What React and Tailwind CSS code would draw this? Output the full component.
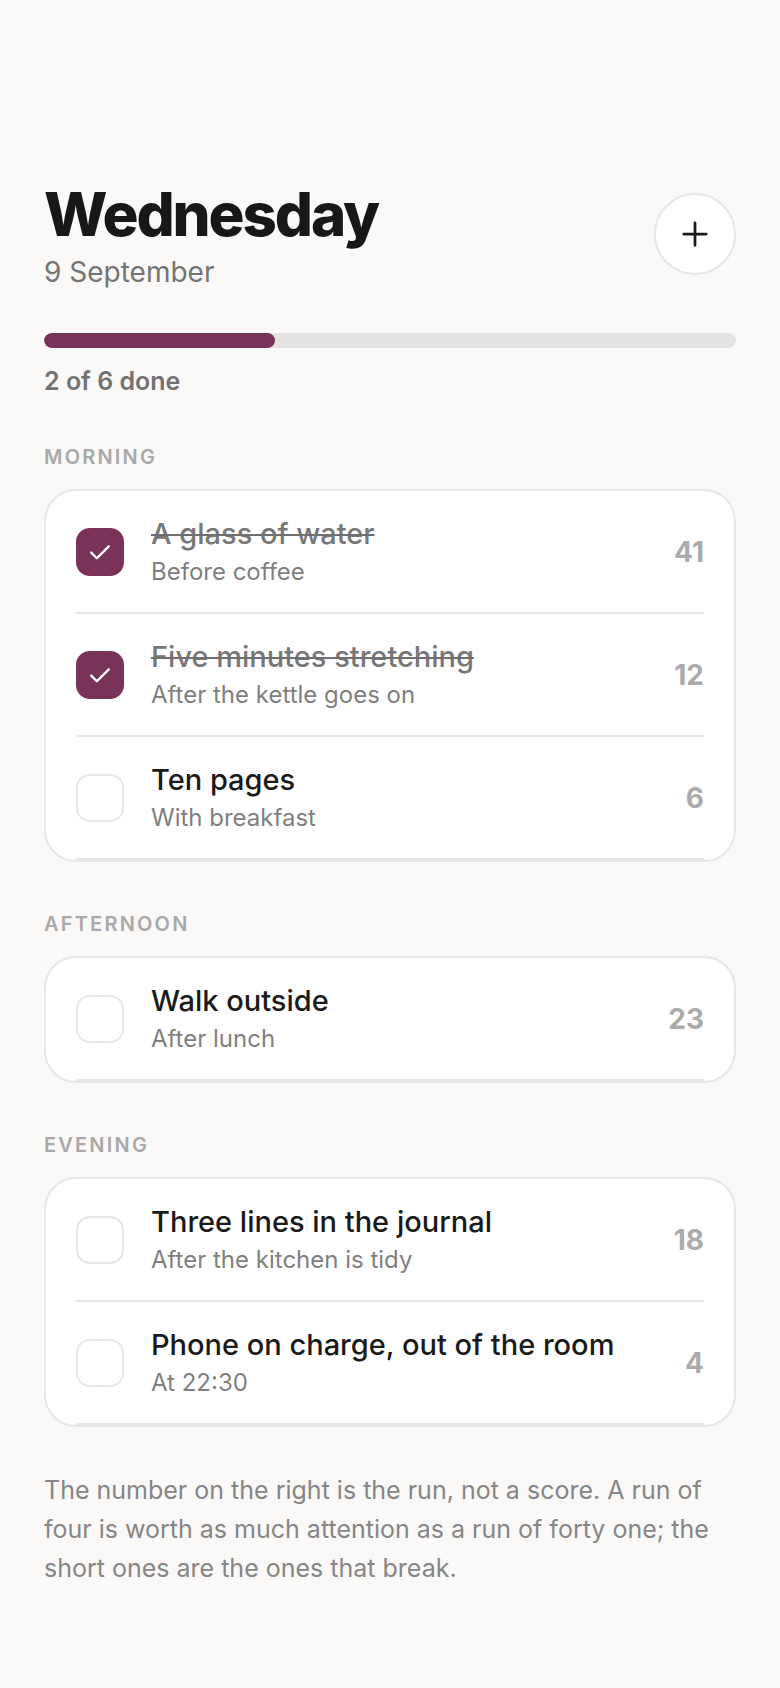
import { useState } from "react";

const sections = [
  {
    name: "Morning",
    items: [
      { title: "A glass of water", note: "Before coffee", run: 41, done: true },
      { title: "Five minutes stretching", note: "After the kettle goes on", run: 12, done: true },
      { title: "Ten pages", note: "With breakfast", run: 6, done: false },
    ],
  },
  {
    name: "Afternoon",
    items: [{ title: "Walk outside", note: "After lunch", run: 23, done: false }],
  },
  {
    name: "Evening",
    items: [
      { title: "Three lines in the journal", note: "After the kitchen is tidy", run: 18, done: false },
      { title: "Phone on charge, out of the room", note: "At 22:30", run: 4, done: false },
    ],
  },
];

function CheckBox({ checked }) {
  if (checked) {
    return (
      <div className="w-12 h-12 shrink-0 rounded-[14px] bg-[#7a3358] flex items-center justify-center">
        <svg width="30" height="30" viewBox="0 0 24 24" fill="none" stroke="white" strokeWidth="1.9" strokeLinecap="round" strokeLinejoin="round">
          <path d="M5 12.5l4.5 4.5L19 7.5" />
        </svg>
      </div>
    );
  }
  return <div className="w-12 h-12 shrink-0 rounded-[14px] border-2 border-[#e9e7e5] bg-white" />;
}

function Row({ item }) {
  return (
    <li className="flex items-center py-[25px] border-b-2 border-[#e8e6e4]">
      <CheckBox checked={item.done} />
      <div className="flex-1 ml-[27px] min-w-0">
        <p
          className={
            item.done
              ? "text-[29px] leading-[36px] font-[550] text-[#777777] line-through decoration-2 decoration-[#6e6e6e]"
              : "text-[29px] leading-[36px] font-[550] text-[#1a1a1a]"
          }
        >
          {item.title}
        </p>
        <p className="mt-1 text-[24px] leading-[31px] text-[#7f7f7f]">{item.note}</p>
      </div>
      <span className="ml-4 text-[28px] font-bold text-[#ababab]">{item.run}</span>
    </li>
  );
}

export default function App() {
  const [list] = useState(sections);
  const all = list.flatMap((s) => s.items);
  const doneCount = all.filter((i) => i.done).length;

  return (
    <div className="min-h-screen bg-[#faf9f7] font-['Inter','Noto_Sans',sans-serif]">
      <div className="px-11 pt-[184px] pb-24">
        {/* header */}
        <div className="flex justify-between items-start">
          <div>
            <h1 className="text-[60px] leading-none font-extrabold tracking-[-0.035em] text-[#171717]">
              Wednesday
            </h1>
            <p className="mt-[10px] text-[28px] leading-[36px] text-[#747474]">9 September</p>
          </div>
          <button className="mt-[9px] w-[82px] h-[82px] rounded-full border-2 border-[#e9e7e5] bg-white flex items-center justify-center">
            <svg width="30" height="30" viewBox="0 0 24 24" fill="none" stroke="#1a1a1a" strokeWidth="2.2" strokeLinecap="round">
              <path d="M12 3v18M3 12h18" />
            </svg>
          </button>
        </div>

        {/* progress */}
        <div className="mt-[43px] h-[15px] rounded-full bg-[#e6e4e2] overflow-hidden">
          <div className="h-full rounded-full bg-[#7a3358]" style={{ width: `${(doneCount / all.length) * 100}%` }} />
        </div>
        <p className="mt-[16px] text-[25px] leading-[34px] font-semibold text-[#727272]">
          {doneCount} of {all.length} done
        </p>

        {list.map((s, idx) => (
          <section key={s.name} className={idx === 0 ? "mt-[44px]" : "mt-[47px]"}>
            <h2 className="text-[20px] leading-[30px] font-semibold uppercase tracking-[0.11em] text-[#a9a9a9]">
              {s.name}
            </h2>
            <div className="mt-[17px] bg-white border-2 border-[#e9e7e5] rounded-[32px] overflow-hidden">
              <ul className="px-[30px]">
                {s.items.map((item) => (
                  <Row key={item.title} item={item} />
                ))}
              </ul>
            </div>
          </section>
        ))}

        <p className="mt-[44px] text-[25px] leading-[39px] text-[#868686]">
          The number on the right is the run, not a score. A run of four is worth as much attention as a run of forty one; the short ones are the ones that break.
        </p>
      </div>
    </div>
  );
}
